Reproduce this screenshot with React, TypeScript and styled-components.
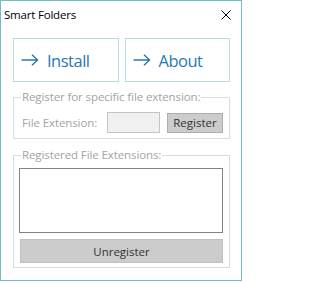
import React from "react";
import styled, { createGlobalStyle } from "styled-components";

const GlobalStyle = createGlobalStyle`
  html, body {
    margin: 0;
    padding: 0;
    background: #ffffff;
  }
  body {
    font-family: "Segoe UI", "Open Sans", "Noto Sans", sans-serif;
  }
`;

const Window = styled.div`
  box-sizing: border-box;
  width: 242px;
  height: 281px;
  border: 1px solid #76bbc3;
  background: #ffffff;
  display: flex;
  flex-direction: column;
`;

const TitleBar = styled.div`
  height: 26px;
  display: flex;
  align-items: center;
  justify-content: space-between;
  padding: 0 10px 0 3px;
`;

const Title = styled.span`
  font-size: 11.5px;
  color: #000000;
  letter-spacing: -0.2px;
`;

const CloseButton = styled.div`
  width: 10px;
  height: 10px;
  display: flex;
  margin-top: 1px;
`;

const Content = styled.div`
  display: flex;
  flex-direction: column;
  padding: 11px 11px 0 12px;
`;

const ButtonRow = styled.div`
  display: grid;
  grid-template-columns: 1fr 1fr;
  gap: 6px;
`;

const BigButton = styled.div`
  box-sizing: border-box;
  height: 44px;
  border: 1px solid #b9dbe2;
  display: flex;
  align-items: center;
  padding-left: 7px;
  gap: 8px;
  color: #2a78b3;
  font-size: 16.5px;
  letter-spacing: -0.5px;
`;

const GroupBox = styled.fieldset<{ $top: number; $bottom: number }>`
  margin: ${(p) => p.$top}px 0 0 0;
  padding: 0 6px ${(p) => p.$bottom}px 8px;
  border: 1px solid #dcdcdc;
  min-width: 0;
`;

const Legend = styled.legend`
  padding: 0 1px;
  margin-left: -1px;
  font-size: 11.5px;
  line-height: 14px;
  color: #a3a3a3;
  letter-spacing: -0.1px;
`;

const FieldRow = styled.div`
  display: flex;
  align-items: center;
  padding-top: 8px;
`;

const FieldLabel = styled.span`
  font-size: 11.5px;
  color: #a3a3a3;
  width: 85px;
  letter-spacing: -0.1px;
`;

const TextBox = styled.div`
  box-sizing: border-box;
  width: 53px;
  height: 21px;
  border: 1px solid #c4c4c4;
  background: #f0f0f0;
`;

const GrayButton = styled.div`
  box-sizing: border-box;
  height: 20px;
  border: 1px solid #adadad;
  background: #cccccc;
  color: #333333;
  font-size: 11.5px;
  display: flex;
  align-items: center;
  justify-content: center;
`;

const RegisterButton = styled(GrayButton)`
  margin-left: 7px;
  width: 56px;
`;

const ListBox = styled.div`
  box-sizing: border-box;
  height: 65px;
  margin: 6px 0 0 -3px;
  border: 1px solid #828282;
  background: #ffffff;
`;

const UnregisterButton = styled(GrayButton)`
  margin: 6px 0 0 -2px;
  height: 24px;
  border-color: #c0c0c0;
`;

const Arrow = () => (
  <svg width="18" height="12" viewBox="0 0 18 12" fill="none">
    <path d="M0.5 6 H16.5 M11 0.8 L16.6 6 L11 11.2" stroke="#2a78b3" strokeWidth="1.4" />
  </svg>
);

export default function App() {
  return (
    <>
      <GlobalStyle />
      <Window>
        <TitleBar>
          <Title>Smart Folders</Title>
          <CloseButton>
            <svg width="10" height="10" viewBox="0 0 10 10">
              <path d="M0.5 0.5 L9.5 9.5 M9.5 0.5 L0.5 9.5" stroke="#000" strokeWidth="1" />
            </svg>
          </CloseButton>
        </TitleBar>
        <Content>
          <ButtonRow>
            <BigButton>
              <Arrow />
              Install
            </BigButton>
            <BigButton>
              <Arrow />
              About
            </BigButton>
          </ButtonRow>

          <GroupBox $top={8} $bottom={5}>
            <Legend>Register for specific file extension:</Legend>
            <FieldRow>
              <FieldLabel>File Extension:</FieldLabel>
              <TextBox />
              <RegisterButton>Register</RegisterButton>
            </FieldRow>
          </GroupBox>

          <GroupBox $top={9} $bottom={4}>
            <Legend>Registered File Extensions:</Legend>
            <ListBox />
            <UnregisterButton>Unregister</UnregisterButton>
          </GroupBox>
        </Content>
      </Window>
    </>
  );
}
